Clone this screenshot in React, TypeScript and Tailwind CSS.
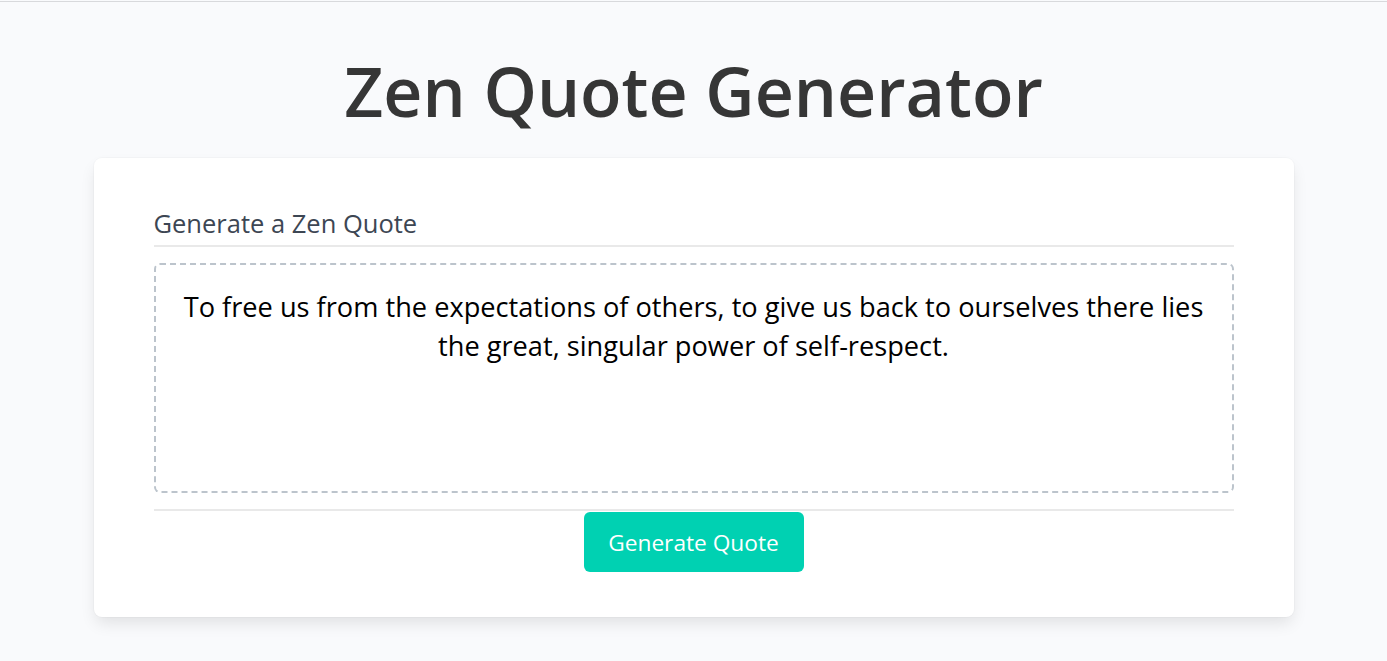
import React, { useState } from 'react';

const quote =
  'To free us from the expectations of others, to give us back to ourselves there lies the great, singular power of self-respect.';

export default function App() {
  const [text] = useState(quote);

  return (
    <div className="min-h-screen bg-[#f9fafc] pt-px font-['Open_Sans',sans-serif]">
      <div className="h-px bg-[#d8d9dc]" />

      {/* Title */}
      <h1 className="mt-[48px] text-center text-[68px] leading-[81px] font-semibold text-[#363636]">
        Zen Quote Generator
      </h1>

      {/* Card */}
      <div className="mx-auto mt-[27px] w-[1200px] rounded-lg bg-white px-[60px] pt-[47px] pb-[45px] shadow-[0_8px_16px_-2px_rgba(10,10,10,0.1),0_0_0_1px_rgba(10,10,10,0.02)]">
        <h2 className="border-b-2 border-[#e9e9e9] pb-[3px] text-[25.5px] leading-[37px] text-[#3d4653]">
          Generate a Zen Quote
        </h2>

        <div className="mt-[16px] h-[230px] rounded-md border-2 border-dashed border-[#bcc4cc] px-4 pt-[22px] text-center text-[27.2px] leading-[39px] text-black">
          {text}
        </div>

        <div className="mt-[16px] h-[2px] bg-[#e9e9e9]" />

        <div className="flex justify-center">
          <button className="mt-px h-[60px] w-[220px] rounded-md bg-[#00d1b2] pt-[3px] text-[22.7px] text-white">
            Generate Quote
          </button>
        </div>
      </div>
    </div>
  );
}
